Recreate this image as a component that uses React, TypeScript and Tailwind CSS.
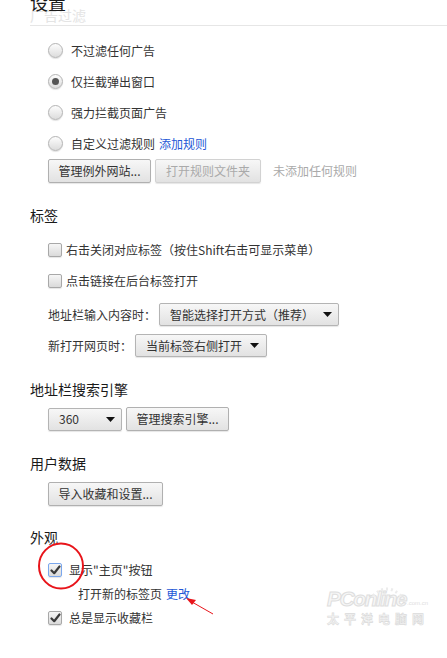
import React from "react";

const font = { fontFamily: '"Noto Sans CJK SC", "Noto Sans", sans-serif' };

function Radio({ checked, label, extra }: { checked?: boolean; label: string; extra?: string }) {
  return (
    <div className="flex h-[31px] items-center">
      <span className="flex h-[15px] w-[15px] items-center justify-center rounded-full border border-[#b4b4b4] bg-gradient-to-b from-[#fdfdfd] to-[#dcdcdc] shadow-[0_1px_1px_rgba(0,0,0,0.12)]">
        {checked && <span className="h-[7px] w-[7px] rounded-full bg-[#555]" />}
      </span>
      <span className="ml-[8px] text-[12px] leading-[16px] text-[#333]">
        {label}
        {extra && <span className="ml-[4px] text-[#2457d6]">{extra}</span>}
      </span>
    </div>
  );
}

function Check({ checked, focus }: { checked?: boolean; focus?: boolean }) {
  return (
    <span
      className={
        "flex h-[14px] w-[14px] items-center justify-center rounded-[2px] border bg-gradient-to-b from-[#f6f6f6] to-[#dadada] shadow-[0_1px_1px_rgba(0,0,0,0.1)] " +
        (focus ? "border-[#7aa7ee]" : "border-[#a8a8a8]")
      }
    >
      {checked && (
        <svg width="11" height="10" viewBox="0 0 11 10">
          <path d="M1.5 5.5 L4.2 8.2 L9.5 1.5" fill="none" stroke="#3a3a3a" strokeWidth="2.2" strokeLinecap="round" strokeLinejoin="round" />
        </svg>
      )}
    </span>
  );
}

function Btn({ children, w, disabled }: { children: React.ReactNode; w: string; disabled?: boolean }) {
  return (
    <div
      className={
        "flex h-[24px] items-center justify-center rounded-[2px] border bg-gradient-to-b from-[#f7f7f7] to-[#e2e2e2] text-[12px] leading-[16px] shadow-[0_1px_1px_rgba(0,0,0,0.1)] " +
        w +
        (disabled ? " border-[#d2d2d2] text-[#aaa]" : " border-[#b0b0b0] text-[#333]")
      }
    >
      {children}
    </div>
  );
}

function Arrow() {
  return (
    <svg width="9" height="5" viewBox="0 0 9 5" className="shrink-0">
      <path d="M0 0 H9 L4.5 5 Z" fill="#111" />
    </svg>
  );
}

function Select({ text, w, pl, pr }: { text: string; w: string; pl: string; pr: string }) {
  return (
    <div
      className={
        "flex h-[23px] items-center justify-between rounded-[2px] border border-[#b4b4b4] bg-gradient-to-b from-[#f7f7f7] to-[#e2e2e2] text-[12px] leading-[16px] text-[#333] shadow-[0_1px_1px_rgba(0,0,0,0.1)] " +
        w + " " + pl + " " + pr
      }
    >
      <span>{text}</span>
      <Arrow />
    </div>
  );
}

function Heading({ children, mt }: { children: React.ReactNode; mt: string }) {
  return <div className={"pl-[30px] text-[14px] leading-[20px] text-[#1a1a1a] " + mt}>{children}</div>;
}

export default function App() {
  return (
    <div className="relative h-[658px] w-[447px] overflow-hidden bg-white" style={font}>
      {/* header */}
      <div className="relative ml-[30px] h-[26px] border-b border-[#e6e6e6]">
        <div className="pt-[7px] text-[14px] leading-[16px] text-[#e4e4e4]">广告过滤</div>
        <div className="absolute left-0 top-[-8px] text-[18px] leading-[20px] text-[#1a1a1a]">设置</div>
      </div>

      {/* radios */}
      <div className="mt-[9px] pl-[48px]">
        <Radio label="不过滤任何广告" />
        <Radio checked label="仅拦截弹出窗口" />
        <Radio label="强力拦截页面广告" />
        <Radio label="自定义过滤规则" extra="添加规则" />
        <div className="flex items-center">
          <Btn w="w-[103px]">管理例外网站...</Btn>
          <div className="ml-[4px]">
            <Btn w="w-[106px]" disabled>
              打开规则文件夹
            </Btn>
          </div>
          <span className="ml-[12px] text-[12px] text-[#aaa]">未添加任何规则</span>
        </div>
      </div>

      <Heading mt="mt-[22px]">标签</Heading>
      <div className="mt-[9px] pl-[48px]">
        <div className="flex h-[31px] items-center">
          <Check />
          <span className="ml-[4px] text-[12px] leading-[16px] text-[#333]">右击关闭对应标签（按住Shift右击可显示菜单）</span>
        </div>
        <div className="flex h-[31px] items-center">
          <Check />
          <span className="ml-[4px] text-[12px] leading-[16px] text-[#333]">点击链接在后台标签打开</span>
        </div>
        <div className="mt-[7px] flex items-center">
          <span className="w-[111px] text-[12px] leading-[16px] text-[#333]">地址栏输入内容时：</span>
          <Select text="智能选择打开方式（推荐）" w="w-[180px]" pl="pl-[10px]" pr="pr-[6px]" />
        </div>
        <div className="mt-[8px] flex items-center">
          <span className="w-[87px] text-[12px] leading-[16px] text-[#333]">新打开网页时：</span>
          <Select text="当前标签右侧打开" w="w-[132px]" pl="pl-[10px]" pr="pr-[7px]" />
        </div>
      </div>

      <Heading mt="mt-[22px]">地址栏搜索引擎</Heading>
      <div className="mt-[8px] flex items-center pl-[48px]">
        <Select text="360" w="w-[74px]" pl="pl-[10px]" pr="pr-[6px]" />
        <div className="ml-[4px]">
          <Btn w="w-[103px]">管理搜索引擎...</Btn>
        </div>
      </div>

      <Heading mt="mt-[22px]">用户数据</Heading>
      <div className="mt-[9px] pl-[48px]">
        <Btn w="w-[115px]">导入收藏和设置...</Btn>
      </div>

      <Heading mt="mt-[21px]">外观</Heading>
      <div className="mt-[11px] pl-[48px]">
        <div className="flex h-[24px] items-center">
          <Check checked focus />
          <span className="ml-[7px] text-[12px] leading-[16px] text-[#333]">显示"主页"按钮</span>
        </div>
        <div className="flex h-[24px] items-center pl-[30px] text-[12px] leading-[16px] text-[#333]">
          打开新的标签页<span className="ml-[4px] text-[#2457d6]">更改</span>
        </div>
        <div className="flex h-[24px] items-center">
          <Check checked />
          <span className="ml-[7px] text-[12px] leading-[16px] text-[#333]">总是显示收藏栏</span>
        </div>
      </div>

      {/* red annotation */}
      <svg className="pointer-events-none absolute left-0 top-0" width="447" height="658">
        <ellipse cx="61" cy="566" rx="22" ry="22.5" fill="none" stroke="#e8141a" strokeWidth="2" />
        <line x1="213" y1="614" x2="192" y2="602" stroke="#e8141a" strokeWidth="1" />
        <path d="M186 598 L196 600 L192 605 Z" fill="#e8141a" />
      </svg>

      {/* watermark */}
      <div className="pointer-events-none absolute left-[327px] top-[587px] select-none">
        <svg width="36" height="12" className="absolute left-[42px] top-[-2px]" viewBox="0 0 36 12">
          <path d="M4 11 Q18 -3 32 11" fill="none" stroke="#ececec" strokeWidth="3" strokeDasharray="2 3" />
        </svg>
        <div className="flex items-end">
          <span
            className="text-[21px] font-bold italic leading-[24px] tracking-[-1.5px] text-[#f6f6f6]"
            style={{ fontFamily: '"Liberation Sans", Arial, sans-serif', WebkitTextStroke: "1px #dedede" }}
          >
            PConline
          </span>
          <span className="mb-[4px] ml-[1px] text-[6px] leading-[8px] text-[#e0e0e0]" style={{ fontFamily: '"Liberation Sans", sans-serif' }}>
            .com.cn
          </span>
        </div>
        <div className="mt-[1px] text-[12px] font-bold leading-[14px] tracking-[5px] text-[#f4f4f4]" style={{ WebkitTextStroke: "0.6px #dadada" }}>
          太平洋电脑网
        </div>
      </div>
    </div>
  );
}
